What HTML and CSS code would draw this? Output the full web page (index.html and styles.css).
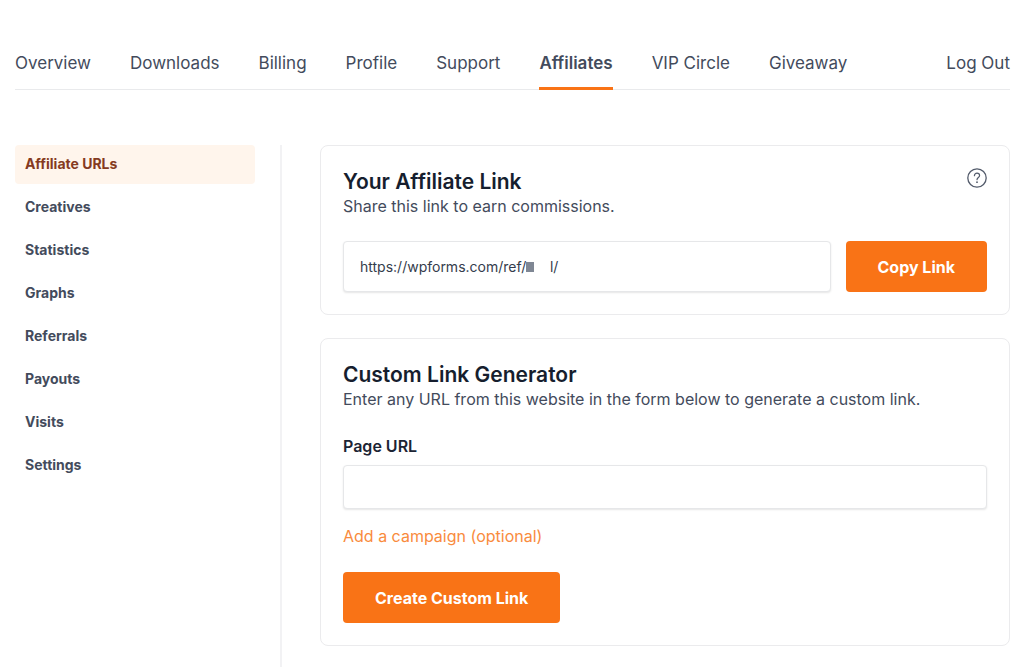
FILE: index.html
```html
<!DOCTYPE html>
<html lang="en">
<head>
    <meta charset="UTF-8">
    <meta name="viewport" content="width=device-width, initial-scale=1.0">
    <title>Affiliates</title>
    <link rel="stylesheet" href="styles.css">
</head>
<body>
    <div class="page">
        <nav class="top-nav">
            <a href="#">Overview</a>
            <a href="#">Downloads</a>
            <a href="#">Billing</a>
            <a href="#">Profile</a>
            <a href="#">Support</a>
            <a href="#" class="active">Affiliates</a>
            <a href="#">VIP Circle</a>
            <a href="#">Giveaway</a>
            <a href="#" class="logout">Log Out</a>
        </nav>

        <div class="layout">
            <aside class="sidebar">
                <a href="#" class="active">Affiliate URLs</a>
                <a href="#">Creatives</a>
                <a href="#">Statistics</a>
                <a href="#">Graphs</a>
                <a href="#">Referrals</a>
                <a href="#">Payouts</a>
                <a href="#">Visits</a>
                <a href="#">Settings</a>
            </aside>

            <main class="content">
                <section class="card">
                    <div class="card-header">
                        <div>
                            <h2>Your Affiliate Link</h2>
                            <p>Share this link to earn commissions.</p>
                        </div>
                        <button class="help" type="button" aria-label="Help">
                            <svg width="20" height="20" viewBox="0 0 20 20" fill="none" stroke="currentColor" stroke-linecap="round" stroke-linejoin="round">
                                <circle cx="10" cy="10" r="9.2" stroke-width="1.3"/>
                                <path d="M7.4 7.7C7.4 6.1 8.5 5.2 10 5.2s2.6 1 2.6 2.4c0 1.9-2.6 2-2.6 4.1" stroke-width="1.2"/>
                                <circle cx="10" cy="14.2" r="0.9" fill="currentColor" stroke="none"/>
                            </svg>
                        </button>
                    </div>
                    <div class="link-row">
                        <div class="link-field">
                            <input type="text" aria-label="Your affiliate link" value="https://wpforms.com/ref/&nbsp;&nbsp;&nbsp;&nbsp;&nbsp;&nbsp;l/" readonly>
                            <span class="mask"></span>
                        </div>
                        <button class="btn" type="button">Copy Link</button>
                    </div>
                </section>

                <section class="card">
                    <h2>Custom Link Generator</h2>
                    <p>Enter any URL from this website in the form below to generate a custom link.</p>
                    <form class="generator">
                        <label for="pageUrl">Page URL</label>
                        <input type="text" id="pageUrl">
                        <a href="#" class="campaign">Add a campaign (optional)</a>
                        <button class="btn" type="button">Create Custom Link</button>
                    </form>
                </section>
            </main>
        </div>
    </div>
</body>
</html>
```
FILE: styles.css
```css
* {
    box-sizing: border-box;
}
body {
    margin: 0;
    font-family: Inter, "Liberation Sans", sans-serif;
    font-size: 16px;
    color: #434b5c;
    background: #fff;
}
a {
    color: inherit;
    text-decoration: none;
}
h2, p {
    margin: 0;
}
.page {
    display: flex;
    flex-direction: column;
    min-height: 100vh;
    padding: 36px 14px 0 15px;
}
.top-nav {
    display: flex;
    gap: 39px;
    border-bottom: 1px solid #e9eaec;
    font-size: 17px;
    line-height: 24px;
    white-space: nowrap;
}
.top-nav a {
    padding: 15px 0 12px;
    margin-bottom: -1px;
    border-bottom: 3px solid transparent;
}
.top-nav .active {
    font-weight: 600;
    border-color: #f97316;
}
.top-nav .logout {
    margin-left: auto;
}
.layout {
    display: flex;
    flex: 1;
    margin-top: 55px;
}
.sidebar {
    display: flex;
    flex-direction: column;
    gap: 4px;
    width: 267px;
    padding-right: 25px;
    border-right: 2px solid #f2f2f4;
    font-size: 14px;
    font-weight: 700;
    line-height: 19px;
}
.sidebar a {
    padding: 9px 10px 11px;
    border-radius: 4px;
}
.sidebar .active {
    color: #853a21;
    background: #fff5ec;
}
.content {
    flex: 1;
    min-width: 0;
    padding: 0 0 21px 38px;
}
.card {
    margin-bottom: 23px;
    padding: 22px;
    border: 1px solid #ebebed;
    border-radius: 8px;
}
.card:last-child {
    margin-bottom: 0;
}
.card-header {
    display: flex;
    justify-content: space-between;
    align-items: flex-start;
}
h2 {
    font-size: 21px;
    font-weight: 600;
    line-height: 28px;
    color: #161e2e;
}
p {
    font-size: 16px;
    line-height: 20px;
}
.help {
    display: flex;
    padding: 0;
    border: none;
    color: #535b6b;
    background: none;
    cursor: pointer;
}
.link-row {
    display: flex;
    gap: 15px;
    margin-top: 25px;
}
.link-field {
    position: relative;
    flex: 1;
}
input {
    width: 100%;
    height: 44px;
    padding: 0 16px;
    border: 1px solid #e6e7e9;
    border-radius: 4px;
    font-family: inherit;
    font-size: 14px;
    color: #343c4c;
    background: #fff;
    box-shadow: 0 1px 2px rgba(0, 0, 0, 0.1);
}
.link-field input {
    height: 51px;
}
.mask {
    position: absolute;
    top: 21px;
    left: 183px;
    width: 8px;
    height: 10px;
    background: #7f8794;
}
.btn {
    height: 51px;
    padding: 0 32px;
    border: none;
    border-radius: 4px;
    font-family: inherit;
    font-size: 16px;
    font-weight: 700;
    color: #fff;
    background: #f97316;
    cursor: pointer;
}
.generator {
    display: flex;
    flex-direction: column;
    align-items: flex-start;
}
.generator label {
    margin: 26px 0 8px;
    font-weight: 600;
    line-height: 22px;
    color: #1c2434;
}
.campaign {
    margin: 16px 0 25px;
    line-height: 22px;
    color: #f98b3d;
}
```
